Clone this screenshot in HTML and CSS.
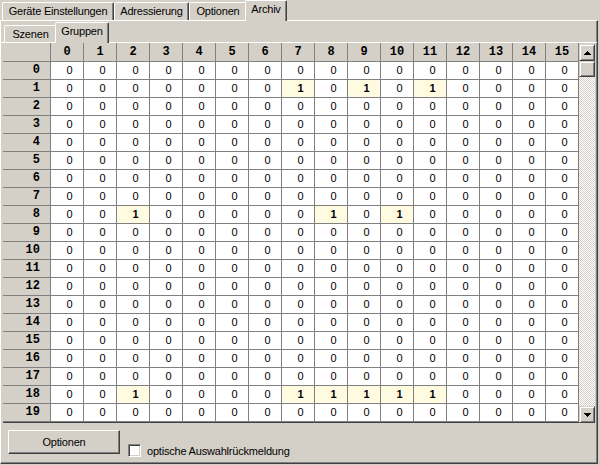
FILE: index.html
```html
<!DOCTYPE html>
<html lang="de">
<head>
<meta charset="utf-8">
<title>Archiv</title>
<link rel="stylesheet" href="styles.css">
</head>
<body>
<div class="otabs">
  <div class="tab t1">Geräte Einstellungen</div>
  <div class="tab t2">Adressierung</div>
  <div class="tab t3">Optionen</div>
  <div class="tab t4 active">Archiv</div>
</div>
<div class="panel">
  <div class="itabs">
    <div class="tab s1">Szenen</div>
    <div class="tab s2 active">Gruppen</div>
  </div>
  <div class="ipanel">
    <div class="gridbox">
      <div class="gridclip">
        <table class="grid">
          <tr class="head"><th class="corner"></th><th>0</th><th>1</th><th>2</th><th>3</th><th>4</th><th>5</th><th>6</th><th>7</th><th>8</th><th>9</th><th>10</th><th>11</th><th>12</th><th>13</th><th>14</th><th>15</th></tr>
          <tr><th>0</th><td>0</td><td>0</td><td>0</td><td>0</td><td>0</td><td>0</td><td>0</td><td>0</td><td>0</td><td>0</td><td>0</td><td>0</td><td>0</td><td>0</td><td>0</td><td>0</td></tr>
          <tr><th>1</th><td>0</td><td>0</td><td>0</td><td>0</td><td>0</td><td>0</td><td>0</td><td class="on">1</td><td>0</td><td class="on">1</td><td>0</td><td class="on">1</td><td>0</td><td>0</td><td>0</td><td>0</td></tr>
          <tr><th>2</th><td>0</td><td>0</td><td>0</td><td>0</td><td>0</td><td>0</td><td>0</td><td>0</td><td>0</td><td>0</td><td>0</td><td>0</td><td>0</td><td>0</td><td>0</td><td>0</td></tr>
          <tr><th>3</th><td>0</td><td>0</td><td>0</td><td>0</td><td>0</td><td>0</td><td>0</td><td>0</td><td>0</td><td>0</td><td>0</td><td>0</td><td>0</td><td>0</td><td>0</td><td>0</td></tr>
          <tr><th>4</th><td>0</td><td>0</td><td>0</td><td>0</td><td>0</td><td>0</td><td>0</td><td>0</td><td>0</td><td>0</td><td>0</td><td>0</td><td>0</td><td>0</td><td>0</td><td>0</td></tr>
          <tr><th>5</th><td>0</td><td>0</td><td>0</td><td>0</td><td>0</td><td>0</td><td>0</td><td>0</td><td>0</td><td>0</td><td>0</td><td>0</td><td>0</td><td>0</td><td>0</td><td>0</td></tr>
          <tr><th>6</th><td>0</td><td>0</td><td>0</td><td>0</td><td>0</td><td>0</td><td>0</td><td>0</td><td>0</td><td>0</td><td>0</td><td>0</td><td>0</td><td>0</td><td>0</td><td>0</td></tr>
          <tr><th>7</th><td>0</td><td>0</td><td>0</td><td>0</td><td>0</td><td>0</td><td>0</td><td>0</td><td>0</td><td>0</td><td>0</td><td>0</td><td>0</td><td>0</td><td>0</td><td>0</td></tr>
          <tr><th>8</th><td>0</td><td>0</td><td class="on">1</td><td>0</td><td>0</td><td>0</td><td>0</td><td>0</td><td class="on">1</td><td>0</td><td class="on">1</td><td>0</td><td>0</td><td>0</td><td>0</td><td>0</td></tr>
          <tr><th>9</th><td>0</td><td>0</td><td>0</td><td>0</td><td>0</td><td>0</td><td>0</td><td>0</td><td>0</td><td>0</td><td>0</td><td>0</td><td>0</td><td>0</td><td>0</td><td>0</td></tr>
          <tr><th>10</th><td>0</td><td>0</td><td>0</td><td>0</td><td>0</td><td>0</td><td>0</td><td>0</td><td>0</td><td>0</td><td>0</td><td>0</td><td>0</td><td>0</td><td>0</td><td>0</td></tr>
          <tr><th>11</th><td>0</td><td>0</td><td>0</td><td>0</td><td>0</td><td>0</td><td>0</td><td>0</td><td>0</td><td>0</td><td>0</td><td>0</td><td>0</td><td>0</td><td>0</td><td>0</td></tr>
          <tr><th>12</th><td>0</td><td>0</td><td>0</td><td>0</td><td>0</td><td>0</td><td>0</td><td>0</td><td>0</td><td>0</td><td>0</td><td>0</td><td>0</td><td>0</td><td>0</td><td>0</td></tr>
          <tr><th>13</th><td>0</td><td>0</td><td>0</td><td>0</td><td>0</td><td>0</td><td>0</td><td>0</td><td>0</td><td>0</td><td>0</td><td>0</td><td>0</td><td>0</td><td>0</td><td>0</td></tr>
          <tr><th>14</th><td>0</td><td>0</td><td>0</td><td>0</td><td>0</td><td>0</td><td>0</td><td>0</td><td>0</td><td>0</td><td>0</td><td>0</td><td>0</td><td>0</td><td>0</td><td>0</td></tr>
          <tr><th>15</th><td>0</td><td>0</td><td>0</td><td>0</td><td>0</td><td>0</td><td>0</td><td>0</td><td>0</td><td>0</td><td>0</td><td>0</td><td>0</td><td>0</td><td>0</td><td>0</td></tr>
          <tr><th>16</th><td>0</td><td>0</td><td>0</td><td>0</td><td>0</td><td>0</td><td>0</td><td>0</td><td>0</td><td>0</td><td>0</td><td>0</td><td>0</td><td>0</td><td>0</td><td>0</td></tr>
          <tr><th>17</th><td>0</td><td>0</td><td>0</td><td>0</td><td>0</td><td>0</td><td>0</td><td>0</td><td>0</td><td>0</td><td>0</td><td>0</td><td>0</td><td>0</td><td>0</td><td>0</td></tr>
          <tr><th>18</th><td>0</td><td>0</td><td class="on">1</td><td>0</td><td>0</td><td>0</td><td>0</td><td class="on">1</td><td class="on">1</td><td class="on">1</td><td class="on">1</td><td class="on">1</td><td>0</td><td>0</td><td>0</td><td>0</td></tr>
          <tr><th>19</th><td>0</td><td>0</td><td>0</td><td>0</td><td>0</td><td>0</td><td>0</td><td>0</td><td>0</td><td>0</td><td>0</td><td>0</td><td>0</td><td>0</td><td>0</td><td>0</td></tr>
        </table>
      </div>
      <div class="vscroll">
        <div class="sbtn"><svg width="7" height="4" viewBox="0 0 7 4"><path d="M3 0h1v1h-1zM2 1h3v1h-3zM1 2h5v1h-5zM0 3h7v1h-7z"/></svg></div>
        <div class="thumb"></div>
        <div class="track"></div>
        <div class="sbtn"><svg width="7" height="4" viewBox="0 0 7 4"><path d="M0 0h7v1h-7zM1 1h5v1h-5zM2 2h3v1h-3zM3 3h1v1h-1z"/></svg></div>
      </div>
    </div>
    <div class="footer">
      <button class="btn" type="button">Optionen</button>
      <label class="check"><span class="box"></span><span>optische Auswahlrückmeldung</span></label>
    </div>
  </div>
</div>
</body>
</html>
```

FILE: styles.css
```css
* { box-sizing: border-box; }
html, body { margin: 0; padding: 0; }
body {
  width: 600px;
  height: 465px;
  overflow: hidden;
  background: #d4d0c8;
  color: #000;
  font-family: "Liberation Sans", Arial, sans-serif;
  font-size: 11px;
  letter-spacing: -0.2px;
}

/* ---------- tabs ---------- */
.otabs {
  display: flex;
  align-items: flex-end;
  height: 20px;
  padding-left: 2px;
}
.tab {
  height: 18px;
  border: 1px solid;
  border-bottom: 0;
  border-color: #fff #404040 transparent #fff;
  box-shadow: inset -1px 0 #808080;
  border-radius: 2px 2px 0 0;
  background: #d4d0c8;
  text-align: center;
  white-space: nowrap;
  line-height: 17px;
}
.tab.active {
  position: relative;
  z-index: 2;
  height: 21px;
  margin: 0 -2px -1px;
  line-height: 16px;
}
.t1 { width: 112px; }
.t2 { width: 75px; }
.t3 { width: 58px; }
.t4 { width: 42px; }

.panel {
  width: 598px;
  height: 444px;
  border: 1px solid;
  border-color: #fff #404040 #404040 #fff;
  box-shadow: inset -1px -1px #808080;
}

.itabs {
  display: flex;
  align-items: flex-end;
  height: 21px;
  padding-left: 3px;
}
.itabs .tab { height: 17px; line-height: 16px; }
.itabs .tab.active { height: 21px; line-height: 17px; }
.s1 { width: 53px; }
.s2 { width: 54px; }

.ipanel {
  border-top: 1px solid #fff;
}

/* ---------- grid ---------- */
.gridbox {
  display: flex;
  height: 380px;
  margin-left: 2px;
}
.gridclip {
  width: 576px;
  height: 380px;
  overflow: hidden;
  border-bottom: 1px solid #404040;
}
.grid {
  width: 576px;
  table-layout: fixed;
  border-collapse: separate;
  border-spacing: 0;
}
.grid th, .grid td {
  height: 18px;
  padding: 0;
  border-right: 1px solid #808080;
  border-bottom: 1px solid #808080;
  line-height: 17px;
  overflow: hidden;
  white-space: nowrap;
}
.grid .head th { height: 19px; line-height: 18px; }
.grid th {
  width: 33px;
  background: #d4d0c8;
  font-family: "Liberation Mono", "Courier New", monospace;
  font-weight: bold;
  font-size: 12px;
  letter-spacing: 0;
  text-align: center;
}
.grid th.corner { width: 48px; }
.grid tr th:first-child {
  text-align: right;
  padding-right: 10px;
}
.grid td {
  background: #fff;
  text-align: center;
  padding-left: 5px;
}
.grid td.on {
  background: #fffbe1;
  font-weight: bold;
}

/* ---------- scrollbar ---------- */
.vscroll {
  width: 16px;
  display: flex;
  flex-direction: column;
  padding-top: 1px;
}
.sbtn, .thumb {
  border: 1px solid;
  border-color: #d4d0c8 #404040 #404040 #d4d0c8;
  box-shadow: inset 1px 1px #fff, inset -1px -1px #808080;
  background: #d4d0c8;
}
.sbtn {
  height: 17px;
  display: flex;
  align-items: center;
  justify-content: center;
}
.sbtn svg { display: block; }
.thumb { height: 16px; }
.track {
  flex: 1;
  background: repeating-conic-gradient(#fff 0 25%, #d4d0c8 0 50%) 0 0 / 2px 2px;
}

/* ---------- footer ---------- */
.footer {
  display: flex;
  align-items: flex-start;
  padding: 7px 0 0 7px;
}
.btn {
  width: 112px;
  height: 24px;
  margin: 0;
  padding: 0;
  background: #d4d0c8;
  border: 1px solid;
  border-color: #fff #404040 #404040 #fff;
  box-shadow: inset -1px -1px #808080;
  border-radius: 0;
  font: inherit;
  letter-spacing: inherit;
  color: #000;
}
.check {
  display: flex;
  align-items: center;
  margin: 14px 0 0 8px;
}
.box {
  width: 13px;
  height: 13px;
  margin-right: 6px;
  background: #fff;
  border: 1px solid;
  border-color: #808080 #fff #fff #808080;
  box-shadow: inset 1px 1px #404040, inset -1px -1px #d4d0c8;
}
```
